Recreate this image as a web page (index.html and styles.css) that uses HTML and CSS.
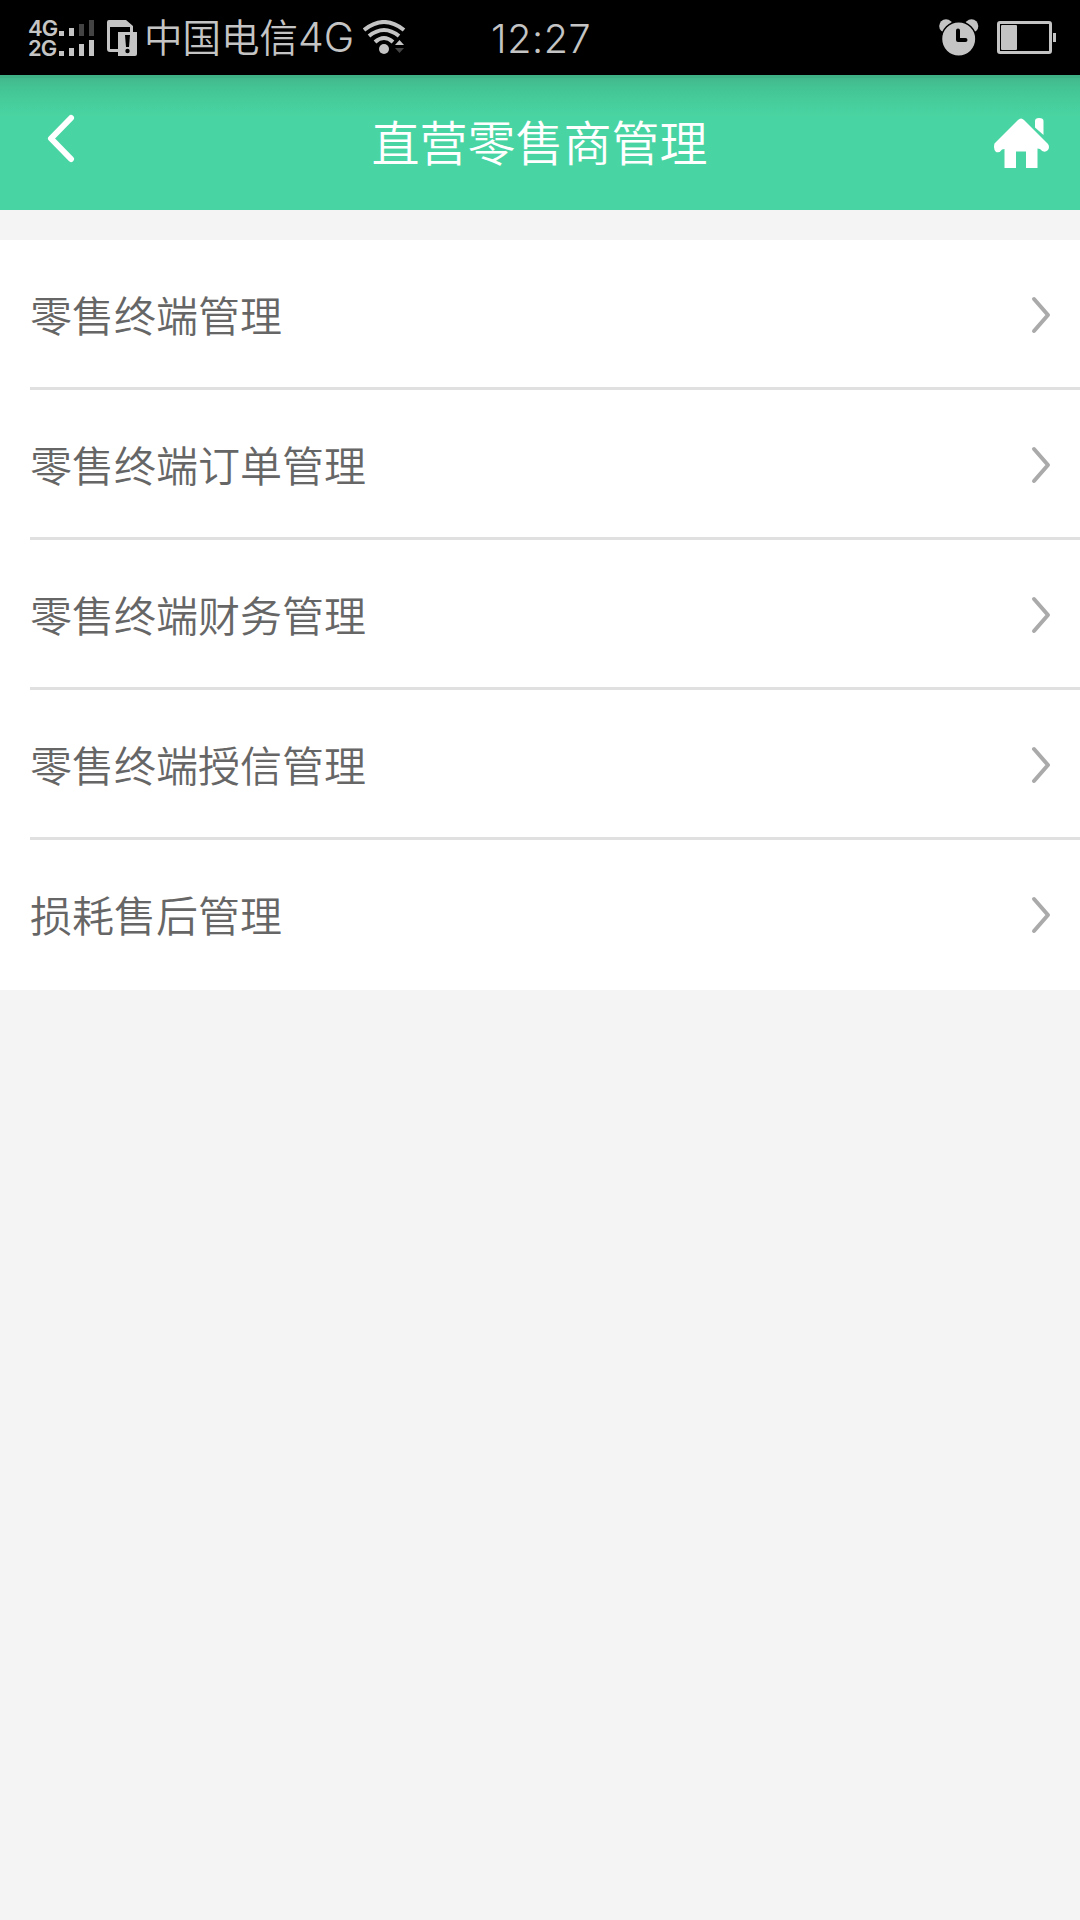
FILE: index.html
```html
<!DOCTYPE html>
<html lang="zh-CN">
<head>
  <meta charset="UTF-8">
  <meta name="viewport" content="width=device-width, initial-scale=1">
  <title>直营零售商管理</title>
  <link rel="stylesheet" href="styles.css">
</head>
<body>

<!-- Status bar -->
<div class="status-bar">
  <div class="status-left">
    <div class="network">
      <span>4G</span>
      <span>2G</span>
    </div>
    <svg class="signal" width="36" height="36" viewBox="0 0 36 36">
      <path d="M0 11h5v5h-5zM10 8h5v8h-5zM0 31h5v5h-5zM10 28h5v8h-5zM20 24h5v12h-5zM30 20h5v16h-5z"/>
      <path class="dim" d="M20 4h5v12h-5zM30 0h5v16h-5z"/>
    </svg>
    <svg class="sim" width="30" height="36" viewBox="0 0 30 36">
      <path fill-rule="evenodd" d="M2 0H19L26 6V12H23V7H3V29H11V32H3Q0 32 0 29V2Q0 0 2 0Z"/>
      <path d="M11 12H30V34Q30 36 28 36H11Z"/>
      <path class="mark" d="M18 15h5l-1 12h-3z"/>
      <circle class="mark" cx="20.5" cy="31" r="2.2"/>
    </svg>
    <span class="carrier">中国电信<span class="net">4G</span></span>
    <svg class="wifi" width="44" height="36" viewBox="0 0 44 36">
      <path class="arc" d="M1 10Q21 -6 41 10M6 16Q21 4 36 16M12 22Q21 14 30 22"/>
      <circle cx="21" cy="29" r="5"/>
      <path d="M32 25l4.500-5 4.500 5z"/>
      <path class="dim" d="M32 28h9l-4.500 5z"/>
    </svg>
  </div>
  <span class="time">12:27</span>
  <div class="status-right">
    <svg width="40" height="37" viewBox="0 0 40 37">
      <circle cx="7" cy="7" r="6.800"/>
      <circle cx="32.500" cy="7" r="6.800"/>
      <circle class="face" cx="19.700" cy="20" r="17.200"/>
      <path class="hands" d="M19 11.500v9.500h7.500"/>
    </svg>
    <svg width="60" height="34" viewBox="0 0 60 34">
      <rect class="case" x="1.500" y="1.500" width="52" height="30" rx="1.500"/>
      <rect x="4" y="4" width="16" height="25" rx="1"/>
      <rect x="56" y="12" width="3" height="9"/>
    </svg>
  </div>
</div>

<!-- Header -->
<header class="header">
  <a class="back" href="#">
    <svg width="28" height="50" viewBox="0 0 28 50">
      <path d="M24 4L4 24.500L24 45"/>
    </svg>
  </a>
  <h1>直营零售商管理</h1>
  <a class="home" href="#">
    <svg width="56" height="52" viewBox="0 0 56 52">
      <path d="M24 2Q27-1 30 2L54 26Q56 29 54 32Q50 36 46 31L43.500 30.500V50H32V33.500H22V50H10.500V31L8 31.500Q6 35 2 34Q-1 31 0.500 25.500Z"/>
      <path d="M41 3Q41 0 45 0Q49.500 0 49.500 3V17L41 9.500Z"/>
    </svg>
  </a>
</header>

<!-- Menu -->
<ul class="menu">
  <li><a href="#">零售终端管理<svg width="20" height="38" viewBox="0 0 20 38"><path d="M3 3L17 19L3 35"/></svg></a></li>
  <li><a href="#">零售终端订单管理<svg width="20" height="38" viewBox="0 0 20 38"><path d="M3 3L17 19L3 35"/></svg></a></li>
  <li><a href="#">零售终端财务管理<svg width="20" height="38" viewBox="0 0 20 38"><path d="M3 3L17 19L3 35"/></svg></a></li>
  <li><a href="#">零售终端授信管理<svg width="20" height="38" viewBox="0 0 20 38"><path d="M3 3L17 19L3 35"/></svg></a></li>
  <li><a href="#">损耗售后管理<svg width="20" height="38" viewBox="0 0 20 38"><path d="M3 3L17 19L3 35"/></svg></a></li>
</ul>

</body>
</html>
```
FILE: styles.css
```css
* {
  box-sizing: border-box;
}

body {
  margin: 0;
  min-height: 100vh;
  background-color: #f4f4f4;
  font-family: "Noto Sans CJK SC", sans-serif;
  font-weight: 350;
}

a {
  color: inherit;
  text-decoration: none;
}

svg {
  display: block;
  flex: none;
}

/* Status bar */
.status-bar {
  display: grid;
  grid-template-columns: 491px 1fr auto;
  height: 75px;
  background-color: #000;
  color: #c4c4c4;
  fill: #c4c4c4;
}

.status-left {
  display: flex;
  align-items: flex-start;
  padding: 20px 0 0 28px;
}

.network {
  width: 31px;
  margin-top: -2px;
  font: 600 22px/20px Inter, sans-serif;
  letter-spacing: -1px;
}

.network span {
  display: block;
}

.dim {
  fill: #444;
}

.sim {
  margin-left: 12px;
}

.mark {
  fill: #000;
}

.carrier {
  margin: -4px 0 0 7px;
  width: 208px;
  font-size: 38.500px;
  line-height: 38px;
  white-space: nowrap;
}

.net {
  font-family: Inter, sans-serif;
  font-weight: 300;
  font-size: 41px;
}

.wifi {
  margin-left: 11px;
}

.arc {
  fill: none;
  stroke: #c4c4c4;
  stroke-width: 4;
}

.time {
  font-family: Inter, sans-serif;
  font-weight: 300;
  font-size: 39.500px;
  line-height: 79px;
  letter-spacing: 0.6px;
}

.status-right {
  display: flex;
  gap: 18px;
  padding: 19px 23px 0 0;
}

.status-right svg:last-child {
  margin-top: 2px;
}

.face {
  stroke: #000;
  stroke-width: 1.500;
}

.hands {
  fill: none;
  stroke: #000;
  stroke-width: 4;
  stroke-linecap: round;
  stroke-linejoin: round;
}

.case {
  fill: none;
  stroke: #c4c4c4;
  stroke-width: 3;
}

/* Header */
.header {
  display: flex;
  justify-content: space-between;
  height: 135px;
  padding: 0 30px 0 47px;
  background: linear-gradient(#3fb187 3px, #42ba8e 3px, #45c898 18px, #49d5a3 42px);
  color: #fff;
}

.header h1 {
  margin: 0;
  font-size: 48px;
  font-weight: 350;
  line-height: 131px;
}

.back {
  width: 74px;
  padding-top: 39px;
}

.back path {
  fill: none;
  stroke: #fff;
  stroke-width: 6;
  stroke-linecap: round;
  stroke-linejoin: round;
}

.home {
  display: flex;
  justify-content: flex-end;
  width: 92px;
  padding-top: 43px;
  fill: #fff;
}

/* Menu */
.menu {
  margin: 30px 0 0;
  padding: 0 0 0 30px;
  background-color: #fff;
  list-style: none;
}

.menu a {
  display: flex;
  justify-content: space-between;
  align-items: center;
  height: 150px;
  padding-right: 29px;
  border-bottom: 3px solid #e0e0e0;
  color: #666;
  font-size: 42px;
  line-height: 60px;
}

.menu svg {
  margin-top: 3px;
}

.menu li:last-child a {
  border-bottom-color: transparent;
}

.menu path {
  fill: none;
  stroke: #aaa;
  stroke-width: 4;
  stroke-linecap: round;
  stroke-linejoin: round;
}
```
